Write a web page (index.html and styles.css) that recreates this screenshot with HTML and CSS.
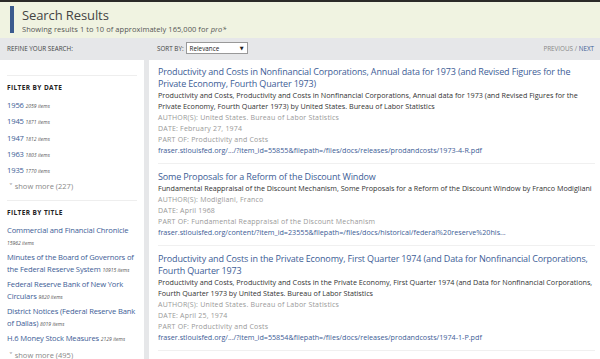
FILE: index.html
```html
<!DOCTYPE html>
<html>

<head>
  <meta charset="UTF-8">
  <title>Search Results</title>
  <link rel="stylesheet" href="styles.css">
</head>

<body>

  <div id="page-header">
    <div class="header-mark"></div>
    <div>
      <h1>Search Results</h1>
      <div class="result-count">Showing results 1 to 10 of approximately 165,000 for <em>pro*</em></div>
    </div>
  </div>

  <div id="toolbar">
    <div class="refine-label">REFINE YOUR SEARCH:</div>
    <div class="sort-by">
      SORT BY:
      <span class="sort-select">Relevance <span class="arrow">&#9660;</span></span>
    </div>
    <div class="pager">PREVIOUS / <a href="#">NEXT</a></div>
  </div>

  <div id="content">
    <div id="sidebar">
      <div class="facet">
        <h3>FILTER BY DATE</h3>
        <div class="facet-item"><a href="#">1956</a> <i>2059 items</i></div>
        <div class="facet-item"><a href="#">1945</a> <i>1871 items</i></div>
        <div class="facet-item"><a href="#">1947</a> <i>1812 items</i></div>
        <div class="facet-item"><a href="#">1963</a> <i>1803 items</i></div>
        <div class="facet-item"><a href="#">1935</a> <i>1770 items</i></div>
        <div class="show-more">&#709; show more (227)</div>
      </div>
      <div class="facet">
        <h3>FILTER BY TITLE</h3>
        <div class="title-list">
          <div class="facet-item title-item"><a href="#">Commercial and Financial Chronicle</a> <i>15962 items</i></div>
          <div class="facet-item title-item"><a href="#">Minutes of the Board of Governors of the Federal Reserve System</a> <i>10915 items</i></div>
          <div class="facet-item title-item"><a href="#">Federal Reserve Bank of New York Circulars</a> <i>9820 items</i></div>
          <div class="facet-item title-item"><a href="#">District Notices (Federal Reserve Bank of Dallas)</a> <i>8019 items</i></div>
          <div class="facet-item title-item"><a href="#">H.6 Money Stock Measures</a> <i>2129 items</i></div>
        </div>
        <div class="show-more">&#709; show more (495)</div>
      </div>
    </div>

    <div id="results">
      <div class="result">
        <a class="result-title" href="#">Productivity and Costs in Nonfinancial Corporations, Annual data for 1973 (and Revised Figures for the Private Economy, Fourth Quarter 1973)</a>
        <div class="result-desc">Productivity and Costs, Productivity and Costs in Nonfinancial Corporations, Annual data for 1973 (and Revised Figures for the Private Economy, Fourth Quarter 1973) by United States. Bureau of Labor Statistics</div>
        <div class="meta">AUTHOR(S): United States. Bureau of Labor Statistics</div>
        <div class="meta">DATE: February 27, 1974</div>
        <div class="meta">PART OF: Productivity and Costs</div>
        <a class="result-url" href="#">fraser.stlouisfed.org/.../?item_id=55855&amp;filepath=/files/docs/releases/prodandcosts/1973-4-R.pdf</a>
      </div>
      <div class="result">
        <a class="result-title" href="#">Some Proposals for a Reform of the Discount Window</a>
        <div class="result-desc">Fundamental Reappraisal of the Discount Mechanism, Some Proposals for a Reform of the Discount Window by Franco Modigliani</div>
        <div class="meta">AUTHOR(S): Modigliani, Franco</div>
        <div class="meta">DATE: April 1968</div>
        <div class="meta">PART OF: Fundamental Reappraisal of the Discount Mechanism</div>
        <a class="result-url" href="#">fraser.stlouisfed.org/content/?item_id=23555&amp;filepath=/files/docs/historical/federal%20reserve%20his...</a>
      </div>
      <div class="result">
        <a class="result-title" href="#">Productivity and Costs in the Private Economy, First Quarter 1974 (and Data for Nonfinancial Corporations, Fourth Quarter 1973</a>
        <div class="result-desc">Productivity and Costs, Productivity and Costs in the Private Economy, First Quarter 1974 (and Data for Nonfinancial Corporations, Fourth Quarter 1973 by United States. Bureau of Labor Statistics</div>
        <div class="meta">AUTHOR(S): United States. Bureau of Labor Statistics</div>
        <div class="meta">DATE: April 25, 1974</div>
        <div class="meta">PART OF: Productivity and Costs</div>
        <a class="result-url" href="#">fraser.stlouisfed.org/.../?item_id=55854&amp;filepath=/files/docs/releases/prodandcosts/1974-1-P.pdf</a>
      </div>
    </div>
  </div>

</body>

</html>
```

FILE: styles.css
```css
body {
  margin: 0;
  padding: 0;
  font-family: "Open Sans", "DejaVu Sans", sans-serif;
  background-color: #e6e7e9;
  color: #333;
  border-top: 2px solid #2b2a28;
  overflow: hidden;
}

a {
  color: #3d5d96;
  text-decoration: none;
}

#page-header {
  display: flex;
  align-items: flex-start;
  height: 36px;
  padding-top: 4px;
  padding-left: 10px;
  box-sizing: border-box;
  background-color: #f0f3e1;
}

.header-mark {
  width: 4px;
  height: 27px;
  background-color: #3b5b8e;
  margin-right: 8px;
}

#page-header h1 {
  margin: 0;
  font-size: 13px;
  font-weight: normal;
  line-height: 19px;
  letter-spacing: -0.1px;
  color: #444;
}

.result-count {
  font-size: 7.5px;
  line-height: 9px;
  color: #555;
  letter-spacing: 0.05px;
}

#toolbar {
  display: flex;
  align-items: center;
  height: 20px;
  padding: 0 6px 0 7px;
  font-size: 6.3px;
  color: #444;
}

.refine-label {
  width: 150px;
}

.sort-by {
  flex: 1;
  display: flex;
  align-items: center;
  gap: 2px;
}

.sort-select {
  display: inline-flex;
  justify-content: space-between;
  align-items: center;
  width: 54px;
  height: 10px;
  padding: 0 3px;
  background-color: #fff;
  border: 1px solid #999;
  color: #222;
}

.sort-select .arrow {
  font-size: 5px;
}

.pager {
  color: #888;
}

#content {
  display: flex;
  gap: 5px;
  padding-top: 2px;
}

#sidebar {
  width: 144px;
  flex-shrink: 0;
  background-color: #fff;
  padding: 15px 5px 0 7px;
  box-sizing: border-box;
  height: 300px;
}

.facet {
  border-top: 1px solid #eee;
  margin-right: 2px;
  padding-top: 7px;
  padding-bottom: 6px;
}

.facet h3 {
  margin: 0 0 4px 0;
  font-size: 6.5px;
  line-height: 10px;
  font-weight: bold;
  letter-spacing: 0.4px;
  color: #222;
}

.facet-item {
  font-size: 7.6px;
  line-height: 16.3px;
  letter-spacing: -0.15px;
  margin-right: -2px;
}

.facet-item i {
  font-size: 5px;
  line-height: 1;
  letter-spacing: 0;
  color: #555;
}

.title-list {
  padding-top: 2px;
}

.title-item {
  line-height: 12px;
  margin-bottom: 3px;
}

.show-more {
  font-size: 7.5px;
  color: #888;
  line-height: 16px;
  padding-left: 2px;
}

#results {
  flex: 1;
  background-color: #fff;
  padding: 6px 5px 0 9px;
}

.result {
  border-bottom: 1px solid #f0f0f0;
  padding: 0 0 7px 0;
  margin-bottom: 7px;
}

.result-title {
  display: block;
  font-size: 9px;
  line-height: 12px;
  letter-spacing: -0.15px;
}

.result-desc {
  font-size: 7.2px;
  line-height: 11px;
  color: #333;
}

.meta {
  font-size: 7px;
  line-height: 11px;
  letter-spacing: 0.2px;
  color: #999;
}

.result-url {
  display: block;
  font-size: 7.2px;
  line-height: 11px;
}
```
